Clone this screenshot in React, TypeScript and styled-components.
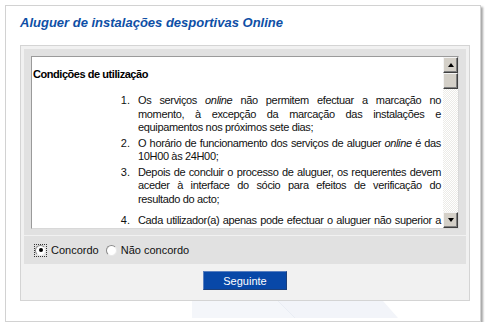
import React from 'react';
import styled, { createGlobalStyle } from 'styled-components';

const GlobalStyle = createGlobalStyle`
    html, body {
        margin: 0;
        padding: 0;
        background: #ffffff;
    }
    body {
        font-family: "Liberation Sans", Arial, sans-serif;
        color: #000;
    }
`;

// each rule is kept as the lines it shows in the box
const rules: React.ReactNode[][] = [
    [
        <>Os serviços <em>online</em> não permitem efectuar a marcação no</>,
        <>momento, à excepção da marcação das instalações e</>,
        <>equipamentos nos próximos sete dias;</>,
    ],
    [
        <>O horário de funcionamento dos serviços de aluguer <em>online</em> é das</>,
        <>10H00 às 24H00;</>,
    ],
    [
        <>Depois de concluir o processo de aluguer, os requerentes devem</>,
        <>aceder à interface do sócio para efeitos de verificação do</>,
        <>resultado do acto;</>,
    ],
    [
        <>Cada utilizador(a) apenas pode efectuar o aluguer não superior a</>,
        <>duas horas por dia e por instalação;</>,
    ],
];

const App: React.FC = () => {
    return (
        <>
            <GlobalStyle />
            <Card>
                <Title>Aluguer de instalações desportivas Online</Title>
                <Panel>
                    <TermsBand>
                        <TermsBox>
                            <TermsContent>
                                <TermsHeading>Condições de utilização</TermsHeading>
                                <RuleList>
                                    {rules.map((lines, i) => (
                                        <Rule key={i}>
                                            {lines.map((l, j) => (
                                                <RuleLine key={j} $last={j === lines.length - 1}>
                                                    {l}
                                                </RuleLine>
                                            ))}
                                        </Rule>
                                    ))}
                                </RuleList>
                            </TermsContent>
                            <Scrollbar>
                                <ScrollButton>
                                    <Arrow $dir="up" />
                                </ScrollButton>
                                <Thumb />
                                <Track />
                                <ScrollButton>
                                    <Arrow $dir="down" />
                                </ScrollButton>
                            </Scrollbar>
                        </TermsBox>
                    </TermsBand>
                    <RadioBand>
                        <RadioOption>
                            <FocusRing>
                                <RadioCircle $checked />
                            </FocusRing>
                            Concordo
                        </RadioOption>
                        <RadioOption>
                            <RadioCircle />
                            Não concordo
                        </RadioOption>
                    </RadioBand>
                    <Actions>
                        <NextButton>Seguinte</NextButton>
                    </Actions>
                </Panel>
                <Watermark width="206" height="17" viewBox="0 0 206 17">
                    <polygon points="0,0 191,0 206,17 0,17" fill="#f2f4f9" />
                    <polygon points="86,0 103,17 0,17 0,0" fill="#f4f6fa" />
                    <line x1="86" y1="0" x2="103" y2="17" stroke="#e9edf4" />
                </Watermark>
            </Card>
        </>
    );
};

export default App;

const Card = styled.div`
    display: flex;
    flex-direction: column;
    margin: 5px 0 0 5px;
    width: 474px;
    height: 315px;
    border: 1px solid #d2d2d2;
    background: #ffffff;
    box-shadow: 2px 2px 2px rgba(0, 0, 0, 0.35);
`;

const Title = styled.h1`
    margin: 9px 0 14px 14px;
    font-size: 13px;
    line-height: 16px;
    font-weight: bold;
    font-style: italic;
    color: #0e4fa6;
`;

const Panel = styled.div`
    display: flex;
    flex-direction: column;
    margin-left: 14px;
    width: 442px;
    height: 251px;
    padding: 3px 3px 0 3px;
    border: 1px solid #d4d4d4;
    background: #f1f1f1;
`;

const TermsBand = styled.div`
    background: #e1e1e1;
    padding: 7px 7px 6px 7px;
`;

const TermsBox = styled.div`
    display: flex;
    flex-direction: row;
    height: 171px;
    border: 1px solid #9a9a9a;
    border-right-color: #d8d8d8;
    border-bottom-color: #d8d8d8;
    background: #ffffff;
    overflow: hidden;
`;

const TermsContent = styled.div`
    flex: 1;
    overflow: hidden;
    padding: 9px 1px 0 1px;
    font-size: 11px;
    color: #111;
`;

const TermsHeading = styled.div`
    font-weight: bold;
    line-height: 16px;
    margin-bottom: 12px;
    letter-spacing: -0.45px;
    color: #000;
`;

const RuleList = styled.ol`
    margin: 0 0 0 100px;
    padding: 0;
`;

const Rule = styled.li`
    line-height: 13.5px;
    padding-left: 5px;
    padding-right: 1px;

    & + & {
        margin-top: 2px;
    }

    &:last-child {
        margin-top: 8px;
    }

    em {
        font-style: italic;
    }
`;

const RuleLine = styled.span<{ $last?: boolean }>`
    display: block;
    white-space: nowrap;
    letter-spacing: -0.35px;
    text-align: justify;
    text-align-last: ${({ $last }) => ($last ? 'left' : 'justify')};
`;

const Scrollbar = styled.div`
    display: flex;
    flex-direction: column;
    width: 15px;
    flex-shrink: 0;
`;

const ScrollButton = styled.div`
    display: flex;
    justify-content: center;
    align-items: center;
    height: 16px;
    box-sizing: border-box;
    background: #d4d0c8;
    border: 1px solid;
    border-color: #f4f4f4 #404040 #404040 #f4f4f4;
    box-shadow: inset -1px -1px 0 #808080;
`;

const Thumb = styled(ScrollButton)``;

const Track = styled.div`
    flex: 1;
    background: repeating-conic-gradient(#ecebe7 0 25%, #ffffff 0 50%) 0 0 / 2px 2px;
`;

const Arrow = styled.div<{ $dir: 'up' | 'down' }>`
    width: 0;
    height: 0;
    border-left: 3px solid transparent;
    border-right: 3px solid transparent;
    ${({ $dir }) =>
        $dir === 'up' ? 'border-bottom: 4px solid #000;' : 'border-top: 4px solid #000;'}
`;

const RadioBand = styled.div`
    display: flex;
    flex-direction: row;
    align-items: center;
    gap: 7px;
    margin-top: 1px;
    height: 31px;
    padding-left: 10px;
    background: #e1e1e1;
`;

const RadioOption = styled.label`
    display: flex;
    align-items: center;
    gap: 4px;
    font-size: 11px;
    line-height: 14px;
    color: #111;
`;

const FocusRing = styled.span`
    display: flex;
    align-items: center;
    justify-content: center;
    width: 11px;
    height: 11px;
    border: 1px dotted #333;
`;

const RadioCircle = styled.span<{ $checked?: boolean }>`
    position: relative;
    display: inline-block;
    box-sizing: border-box;
    width: 11px;
    height: 11px;
    border-radius: 50%;
    border: 1px solid #8a8a8a;
    border-right-color: #e8e8e8;
    border-bottom-color: #e8e8e8;
    background: #ffffff;

    &::after {
        content: '';
        display: ${({ $checked }) => ($checked ? 'block' : 'none')};
        position: absolute;
        left: 2.5px;
        top: 2.5px;
        width: 4px;
        height: 4px;
        border-radius: 50%;
        background: #000;
    }
`;

const Actions = styled.div`
    display: flex;
    justify-content: center;
    padding: 7px 0 10px;
`;

const NextButton = styled.button`
    width: 84px;
    height: 19px;
    padding: 0;
    border: 1px solid #1b3f7a;
    border-top-color: #5a80c0;
    border-left-color: #5a80c0;
    background: #0848a8;
    color: #ffffff;
    font-family: "Liberation Sans", Arial, sans-serif;
    font-size: 11px;
`;

const Watermark = styled.svg`
    display: block;
    margin-left: 186px;
`;
